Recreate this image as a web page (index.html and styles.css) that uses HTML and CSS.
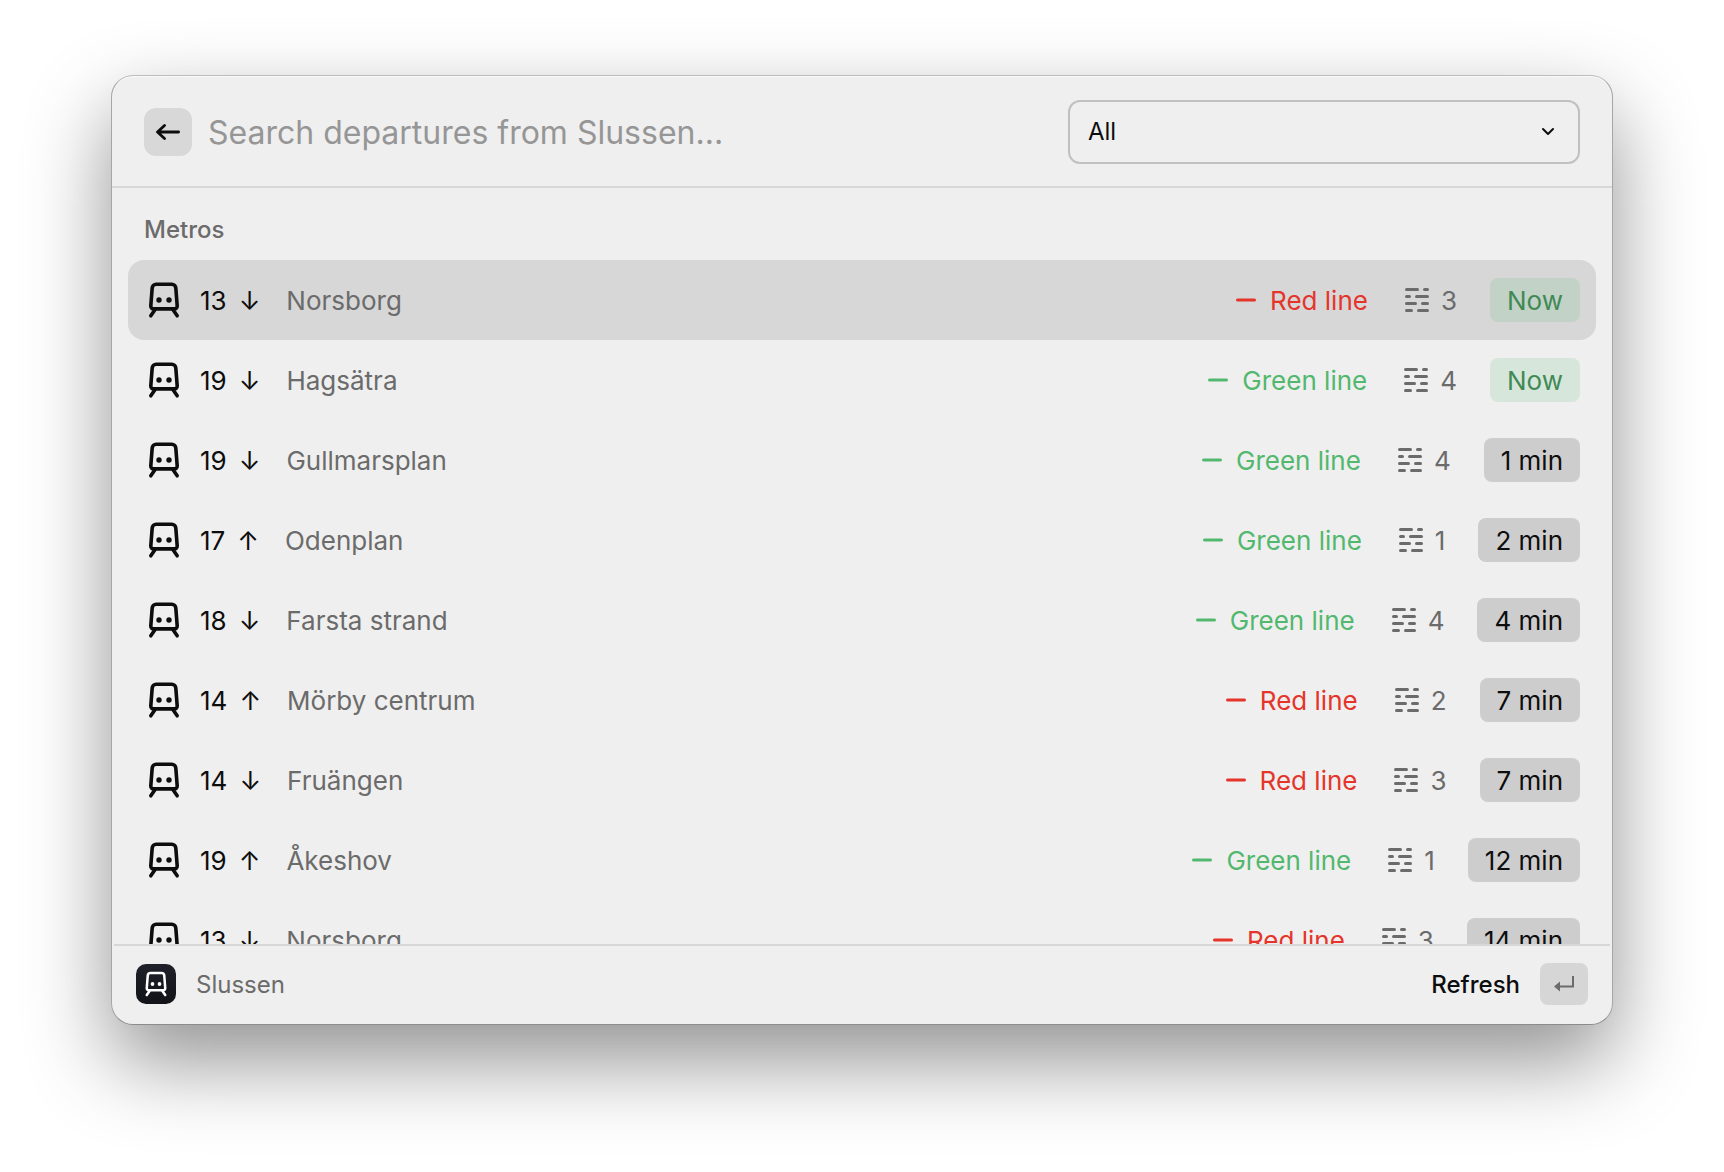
FILE: index.html
```html
<!DOCTYPE html>
<html lang="en">
<head>
<meta charset="utf-8">
<meta name="viewport" content="width=device-width, initial-scale=1">
<title>Slussen departures</title>
<link rel="stylesheet" href="styles.css">
</head>
<body>
<svg class="sprite" aria-hidden="true">
  <symbol id="train" viewBox="0 0 40 40">
    <g fill="none" stroke="currentColor" stroke-width="3.600" stroke-linecap="round" stroke-linejoin="round">
      <path d="M12.200 4.200h15.600a4 4 0 0 1 4 3.700l1.400 17.900a2.800 2.800 0 0 1-2.800 3.100H9.600a2.800 2.800 0 0 1-2.800-3.100L8.200 7.900a4 4 0 0 1 4-3.700z"/>
      <path d="M10.800 30 6.800 35.800M29.200 30l4 5.800"/>
    </g>
    <circle cx="15" cy="20" r="2.700" fill="currentColor"/>
    <circle cx="25" cy="20" r="2.700" fill="currentColor"/>
  </symbol>
  <symbol id="dash" viewBox="0 0 32 32">
    <path d="M7.500 15h17" fill="none" stroke="currentColor" stroke-width="3" stroke-linecap="round"/>
  </symbol>
  <symbol id="track" viewBox="0 0 32 32">
    <path d="M5.500 4.500h11M23.500 4.500h3M5.500 11.500h3M15.500 11.500h11M5.500 18.500h9M21.500 18.500h5M5.500 25.500h5M17.500 25.500h9" fill="none" stroke="currentColor" stroke-width="3" stroke-linecap="round"/>
  </symbol>
</svg>

<main class="window">
  <header class="header">
    <button class="back" type="button" aria-label="Back">
      <svg width="24" height="24" viewBox="0 0 24 24" fill="none" stroke="currentColor" stroke-width="2.800" stroke-linecap="round" stroke-linejoin="round"><path d="M22.600 12H2M8.500 5.500 1.500 12l7 6.500"/></svg>
    </button>
    <input class="search" type="text" aria-label="Search departures" placeholder="Search departures from Slussen...">
    <div class="filter">
      <select class="filter-select" aria-label="Transport type"><option>All</option></select>
      <svg class="filter-chevron" width="14" height="10" viewBox="0 0 14 10" fill="none" stroke="currentColor" stroke-width="2" stroke-linecap="round" stroke-linejoin="round"><path d="M2 2l5 5 5-5"/></svg>
    </div>
  </header>

  <section class="list">
    <h2 class="section-title">Metros</h2>
    <ul class="rows">
      <li class="row selected"><svg class="train"><use href="#train"/></svg><span class="title"><span>13</span><span>↓</span></span><span class="subtitle">Norsborg</span><span class="line red"><svg class="icon"><use href="#dash"/></svg>Red line</span><span class="platform"><svg class="icon"><use href="#track"/></svg>3</span><span class="tag now">Now</span></li>
      <li class="row"><svg class="train"><use href="#train"/></svg><span class="title"><span>19</span><span>↓</span></span><span class="subtitle">Hagsätra</span><span class="line green"><svg class="icon"><use href="#dash"/></svg>Green line</span><span class="platform"><svg class="icon"><use href="#track"/></svg>4</span><span class="tag now">Now</span></li>
      <li class="row"><svg class="train"><use href="#train"/></svg><span class="title"><span>19</span><span>↓</span></span><span class="subtitle">Gullmarsplan</span><span class="line green"><svg class="icon"><use href="#dash"/></svg>Green line</span><span class="platform"><svg class="icon"><use href="#track"/></svg>4</span><span class="tag">1 min</span></li>
      <li class="row"><svg class="train"><use href="#train"/></svg><span class="title"><span>17</span><span>↑</span></span><span class="subtitle">Odenplan</span><span class="line green"><svg class="icon"><use href="#dash"/></svg>Green line</span><span class="platform"><svg class="icon"><use href="#track"/></svg>1</span><span class="tag">2 min</span></li>
      <li class="row"><svg class="train"><use href="#train"/></svg><span class="title"><span>18</span><span>↓</span></span><span class="subtitle">Farsta strand</span><span class="line green"><svg class="icon"><use href="#dash"/></svg>Green line</span><span class="platform"><svg class="icon"><use href="#track"/></svg>4</span><span class="tag">4 min</span></li>
      <li class="row"><svg class="train"><use href="#train"/></svg><span class="title"><span>14</span><span>↑</span></span><span class="subtitle">Mörby centrum</span><span class="line red"><svg class="icon"><use href="#dash"/></svg>Red line</span><span class="platform"><svg class="icon"><use href="#track"/></svg>2</span><span class="tag">7 min</span></li>
      <li class="row"><svg class="train"><use href="#train"/></svg><span class="title"><span>14</span><span>↓</span></span><span class="subtitle">Fruängen</span><span class="line red"><svg class="icon"><use href="#dash"/></svg>Red line</span><span class="platform"><svg class="icon"><use href="#track"/></svg>3</span><span class="tag">7 min</span></li>
      <li class="row"><svg class="train"><use href="#train"/></svg><span class="title"><span>19</span><span>↑</span></span><span class="subtitle">Åkeshov</span><span class="line green"><svg class="icon"><use href="#dash"/></svg>Green line</span><span class="platform"><svg class="icon"><use href="#track"/></svg>1</span><span class="tag">12 min</span></li>
      <li class="row"><svg class="train"><use href="#train"/></svg><span class="title"><span>13</span><span>↓</span></span><span class="subtitle">Norsborg</span><span class="line red"><svg class="icon"><use href="#dash"/></svg>Red line</span><span class="platform"><svg class="icon"><use href="#track"/></svg>3</span><span class="tag">14 min</span></li>
    </ul>
  </section>

  <footer class="footer">
    <span class="app-icon"><svg width="28" height="28"><use href="#train"/></svg></span>
    <span class="app-name">Slussen</span>
    <button class="refresh" type="button"><span class="refresh-label">Refresh</span>
      <span class="key"><svg width="20" height="16" viewBox="0 0 20 16"><path d="M19 0v10.500H5" fill="none" stroke="currentColor" stroke-width="2"/><path d="M0 10.500 6 5.500v10z" fill="currentColor"/></svg></span>
    </button>
  </footer>
</main>
</body>
</html>
```
FILE: styles.css
```css
* {
  box-sizing: border-box;
}

body {
  display: flex;
  flex-direction: column;
  height: 100vh;
  margin: 0;
  padding: 75px 111px 147px;
  background: #fff;
  color: #0d0d0d;
  font-family: Inter, "Liberation Sans", sans-serif;
  font-size: 26px;
  line-height: 32px;
  overflow: hidden;
}

button,
input,
select {
  margin: 0;
  border: 0;
  background: none;
  color: inherit;
  font: inherit;
}

.sprite {
  display: none;
}

.window {
  display: flex;
  flex: 1;
  flex-direction: column;
  min-height: 0;
  border: 1px solid #a6a6a6;
  border-top-color: #bcbcbc;
  border-bottom-color: #8c8c8c;
  border-radius: 22px;
  background: #efefef;
  box-shadow: inset 0 1px 1px #fafafa, 0 36px 84px rgba(0, 0, 0, 0.43);
  overflow: hidden;
}

.header {
  display: flex;
  align-items: center;
  gap: 16px;
  padding: 24px 32px 22px;
  border-bottom: 2px solid #d7d7d7;
}

.back {
  display: flex;
  align-items: center;
  justify-content: center;
  width: 48px;
  height: 48px;
  padding: 0;
  border-radius: 12px;
  background: #d8d8d8;
}

.search {
  flex: 1;
  min-width: 0;
  padding: 2px 0 0;
  font-size: 32px;
  line-height: 40px;
  outline: 0;
}

.search::placeholder {
  color: #969696;
  opacity: 1;
}

.filter {
  display: flex;
  position: relative;
  align-items: center;
  width: 512px;
}

.filter-select {
  width: 100%;
  height: 64px;
  padding: 0 48px 0 18px;
  border: 2px solid #c0c0c0;
  border-radius: 12px;
  appearance: none;
  font-size: 24px;
}

.filter-chevron {
  position: absolute;
  right: 25px;
  pointer-events: none;
}

.list {
  flex: 1;
  min-height: 0;
  padding: 0 16px;
  overflow: hidden;
}

.section-title {
  margin: 0;
  padding: 26px 16px 14px;
  color: #6b6b6b;
  font-size: 24px;
  font-weight: 500;
}

.rows {
  margin: 0;
  padding: 0;
  list-style: none;
}

.row {
  display: flex;
  align-items: center;
  height: 80px;
  padding: 0 16px;
  border-radius: 16px;
  white-space: nowrap;
}

.selected {
  background: #d7d7d7;
}

.train {
  width: 40px;
  height: 40px;
  margin-right: 16px;
}

.title {
  display: flex;
  gap: 12px;
  margin-right: 26px;
  padding-top: 2px;
}

.subtitle {
  flex: 1;
  padding-top: 2px;
  color: #6b6b6b;
}

.icon {
  width: 32px;
  height: 32px;
}

.line,
.platform {
  display: flex;
  align-items: center;
  gap: 8px;
  margin-right: 33px;
  padding-top: 2px;
}

.platform {
  color: #6b6b6b;
}

.red {
  color: #e5352b;
}

.green {
  color: #52b86e;
}

.tag {
  padding: 7px 17px 5px;
  border-radius: 8px;
  background: #cdcdcd;
}

.now {
  background: rgba(82, 184, 110, 0.15);
  color: #408a55;
}

.footer {
  display: flex;
  align-items: center;
  height: 80px;
  margin: 0 2px;
  padding: 0 22px 2px;
  border-top: 2px solid #d7d7d7;
  font-size: 24px;
}

.app-icon {
  display: flex;
  align-items: center;
  justify-content: center;
  width: 40px;
  height: 40px;
  margin-right: 20px;
  border-radius: 10px;
  background: linear-gradient(#20202a, #121318);
  color: #fff;
}

.app-name {
  flex: 1;
  padding-top: 2px;
  color: #6b6b6b;
}

.refresh {
  display: flex;
  align-items: center;
  gap: 20px;
  padding: 0;
  font-weight: 500;
}

.refresh-label {
  padding-top: 2px;
}

.key {
  display: flex;
  align-items: center;
  justify-content: center;
  width: 48px;
  height: 42px;
  border-radius: 8px;
  background: #d6d6d6;
  color: #6b6b6b;
}
```
